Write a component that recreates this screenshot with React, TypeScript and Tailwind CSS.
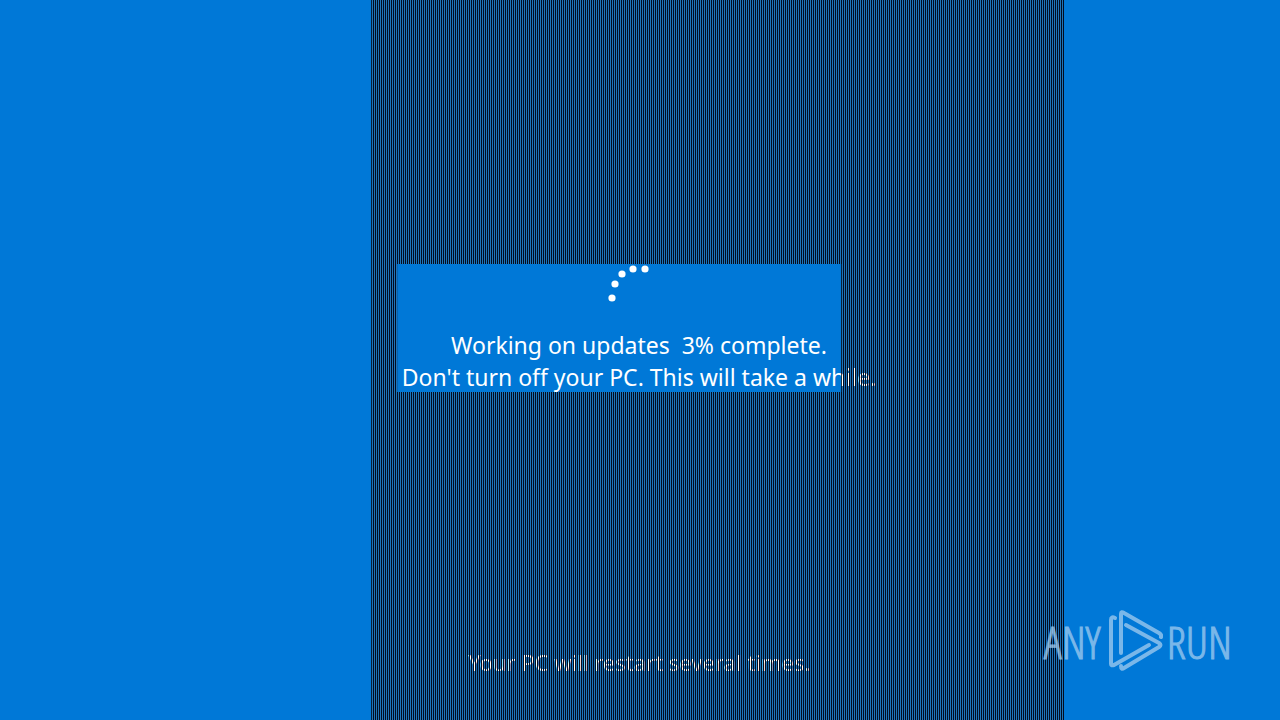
const dots = [
  { cx: 5, cy: 33 },
  { cx: 8, cy: 19 },
  { cx: 15, cy: 9 },
  { cx: 26, cy: 4 },
  { cx: 38, cy: 4 },
];

const Spinner = () => {
  return (
    <svg width="64" height="64" viewBox="0 0 64 64" fill="#fff" role="img" aria-label="Loading">
      {dots.map((dot) => (
        <circle key={dot.cx} cx={dot.cx} cy={dot.cy} r="3.6" />
      ))}
    </svg>
  );
};

const Watermark = () => {
  return (
    <div className="flex items-center gap-1 font-['Open_Sans_Condensed_Light','Open_Sans_Condensed','Roboto_Condensed','Liberation_Sans',sans-serif] text-[45px] leading-none text-[#a3cdf0] opacity-75 [-webkit-text-stroke:1px_#a3cdf0]">
      <span className="mr-1">ANY</span>
      <svg
        width="54"
        height="62"
        viewBox="0 0 54 62"
        fill="none"
        stroke="currentColor"
        strokeWidth="4"
        strokeLinejoin="round"
        strokeLinecap="round"
      >
        <path d="M6 8Q2 6 2 10V54Q2 56 5 55L40 35" />
        <path d="M12 43V4Q12 1 15 3L50 23Q53 25 52 27" />
        <path d="M17 15L50 33Q53 35 50 37L15 58Q12 60 12 56" />
      </svg>
      <span>RUN</span>
    </div>
  );
};

const App = () => {
  return (
    <div className="grid min-h-screen grid-cols-[29%_1fr_216px] overflow-hidden bg-[#0078d7] font-['Noto_Sans','Open_Sans',sans-serif] text-[23px] leading-8 text-white">
      {/* glitched band, with a clean window cut out around the status */}
      <div className="col-start-2 row-start-1 bg-[#1e74b8] [clip-path:polygon(evenodd,0_0,100%_0,100%_100%,0_100%,0_0,26px_calc(50%_-_96px),470px_calc(50%_-_96px),470px_calc(50%_+_32px),26px_calc(50%_+_32px),26px_calc(50%_-_96px))]" />

      <main className="z-10 col-span-3 col-start-1 row-start-1 grid grid-rows-[1fr_auto_1fr] justify-items-center pr-0.5">
        <div className="row-start-2 flex flex-col items-center pb-[62px]">
          <Spinner />
          <p className="whitespace-pre">Working on updates  3% complete.</p>
          <p>Don't turn off your PC. This will take a while.</p>
        </div>
        <p className="row-start-3 self-end pb-[42px] text-[22px]">Your PC will restart several times.</p>
      </main>

      {/* dark scan lines run over the text too */}
      <div className="z-20 col-start-2 row-start-1 bg-[repeating-linear-gradient(90deg,#020c20_0_1px,transparent_1px_2px)] [clip-path:polygon(evenodd,0_0,100%_0,100%_100%,0_100%,0_0,26px_calc(50%_-_96px),470px_calc(50%_-_96px),470px_calc(50%_+_32px),26px_calc(50%_+_32px),26px_calc(50%_-_96px))]" />

      <div className="z-30 col-span-3 col-start-1 row-start-1 self-end justify-self-end pr-12 pb-12">
        <Watermark />
      </div>
    </div>
  );
};

export default App;
